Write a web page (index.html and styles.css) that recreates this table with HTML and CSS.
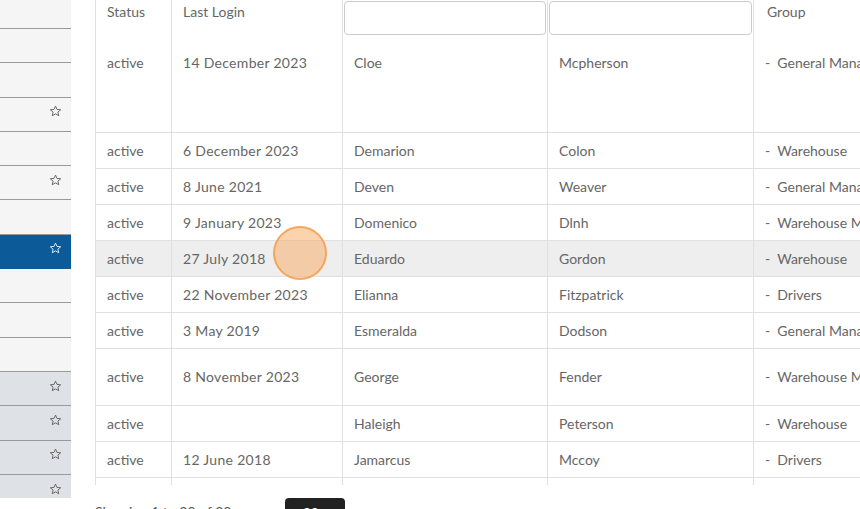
FILE: index.html
```html
<!DOCTYPE html>
<html>
<head>
<meta charset="utf-8">
<link rel="stylesheet" href="styles.css">
</head>
<body>
<div class="page">
  <aside class="side">
    <div class="srow first"></div>
    <div class="srow"></div>
    <div class="srow"></div>
    <div class="srow"><svg class="star" viewBox="0 0 12 12"><path d="M6 1 L7.4 4.1 L10.8 4.4 L8.2 6.6 L9 9.9 L6 8.2 L3 9.9 L3.8 6.6 L1.2 4.4 L4.6 4.1 Z"/></svg></div>
    <div class="srow"></div>
    <div class="srow"><svg class="star" viewBox="0 0 12 12"><path d="M6 1 L7.4 4.1 L10.8 4.4 L8.2 6.6 L9 9.9 L6 8.2 L3 9.9 L3.8 6.6 L1.2 4.4 L4.6 4.1 Z"/></svg></div>
    <div class="srow"></div>
    <div class="srow active"><svg class="star" viewBox="0 0 12 12"><path d="M6 1 L7.4 4.1 L10.8 4.4 L8.2 6.6 L9 9.9 L6 8.2 L3 9.9 L3.8 6.6 L1.2 4.4 L4.6 4.1 Z"/></svg></div>
    <div class="srow"></div>
    <div class="srow"></div>
    <div class="srow"></div>
    <div class="srow shade"><svg class="star" viewBox="0 0 12 12"><path d="M6 1 L7.4 4.1 L10.8 4.4 L8.2 6.6 L9 9.9 L6 8.2 L3 9.9 L3.8 6.6 L1.2 4.4 L4.6 4.1 Z"/></svg></div>
    <div class="srow shade"><svg class="star" viewBox="0 0 12 12"><path d="M6 1 L7.4 4.1 L10.8 4.4 L8.2 6.6 L9 9.9 L6 8.2 L3 9.9 L3.8 6.6 L1.2 4.4 L4.6 4.1 Z"/></svg></div>
    <div class="srow shade"><svg class="star" viewBox="0 0 12 12"><path d="M6 1 L7.4 4.1 L10.8 4.4 L8.2 6.6 L9 9.9 L6 8.2 L3 9.9 L3.8 6.6 L1.2 4.4 L4.6 4.1 Z"/></svg></div>
    <div class="srow shade"><svg class="star" viewBox="0 0 12 12"><path d="M6 1 L7.4 4.1 L10.8 4.4 L8.2 6.6 L9 9.9 L6 8.2 L3 9.9 L3.8 6.6 L1.2 4.4 L4.6 4.1 Z"/></svg></div>
  </aside>
  <main class="main">
    <div class="scroller">
      <table class="grid">
        <colgroup>
          <col class="c-status"><col class="c-login"><col class="c-first"><col class="c-last"><col class="c-group">
        </colgroup>
        <thead>
          <tr class="head">
            <th>Status</th>
            <th>Last Login</th>
            <th class="filter"><input type="text"></th>
            <th class="filter"><input type="text"></th>
            <th class="grp">Group</th>
          </tr>
        </thead>
        <tbody>
          <tr class="firstrow"><td>active</td><td class="date">14 December 2023</td><td>Cloe</td><td>Mcpherson</td><td class="grp">-&nbsp; General Manager</td></tr>
          <tr><td>active</td><td class="date">6 December 2023</td><td>Demarion</td><td>Colon</td><td class="grp">-&nbsp; Warehouse</td></tr>
          <tr><td>active</td><td class="date">8 June 2021</td><td>Deven</td><td>Weaver</td><td class="grp">-&nbsp; General Manager</td></tr>
          <tr><td>active</td><td class="date">9 January 2023</td><td>Domenico</td><td>Dlnh</td><td class="grp">-&nbsp; Warehouse Manager</td></tr>
          <tr class="hover"><td>active</td><td class="date">27 July 2018</td><td>Eduardo</td><td>Gordon</td><td class="grp">-&nbsp; Warehouse</td></tr>
          <tr><td>active</td><td class="date">22 November 2023</td><td>Elianna</td><td>Fitzpatrick</td><td class="grp">-&nbsp; Drivers</td></tr>
          <tr><td>active</td><td class="date">3 May 2019</td><td>Esmeralda</td><td>Dodson</td><td class="grp">-&nbsp; General Manager</td></tr>
          <tr class="tall"><td>active</td><td class="date">8 November 2023</td><td>George</td><td>Fender</td><td class="grp">-&nbsp; Warehouse Manager</td></tr>
          <tr><td>active</td><td class="date"></td><td>Haleigh</td><td>Peterson</td><td class="grp">-&nbsp; Warehouse</td></tr>
          <tr><td>active</td><td class="date">12 June 2018</td><td>Jamarcus</td><td>Mccoy</td><td class="grp">-&nbsp; Drivers</td></tr>
          <tr><td>active</td><td class="date">4 March 2022</td><td>Jayden</td><td>Lowe</td><td class="grp">-&nbsp; Warehouse</td></tr>
        </tbody>
      </table>
    </div>
    <div class="footer">
      <span class="info">Showing 1 to 20 of 20 rows</span>
      <span class="pagesize">20 ▾</span>
      <span class="info light">rows per page</span>
    </div>
  </main>
</div>
<div class="touch"></div>
</body>
</html>
```
FILE: styles.css
```css
html, body {
  margin: 0;
  padding: 0;
  background: #fff;
  overflow: hidden;
}
body {
  width: 860px;
  height: 509px;
  font-family: Lato, "Open Sans", sans-serif;
  font-size: 14px;
  color: #666;
}
.page {
  display: flex;
  gap: 24px;
  height: 509px;
}
.side {
  width: 71px;
  flex: none;
  height: 498px;
  overflow: hidden;
  background: #f5f5f5;
  display: flex;
  flex-direction: column;
}
.srow {
  box-sizing: border-box;
  height: 34.3px;
  flex: none;
  border-bottom: 1px solid #9a9a9a;
  display: flex;
  align-items: center;
  justify-content: flex-end;
  padding-right: 9px;
  padding-bottom: 5px;
}
.srow.first { height: 29px; }
.srow.active {
  background: #0c5a97;
  border-bottom-color: #0c5a97;
}
.srow.shade { background: #dee1e6; }
.star {
  width: 13px;
  height: 13px;
  fill: none;
  stroke: #666;
  stroke-width: 0.9;
  stroke-linejoin: round;
}
.srow.active .star { stroke: #d8ecff; }
.main {
  flex: 1;
  min-width: 0;
  display: flex;
  flex-direction: column;
}
.scroller {
  height: 485px;
  overflow: hidden;
  flex: none;
}
.grid {
  border-collapse: collapse;
  table-layout: fixed;
  width: 861px;
}
.c-status { width: 76px; }
.c-login { width: 171px; }
.c-first { width: 205px; }
.c-last { width: 206px; }
.c-group { width: 203px; }
.grid th, .grid td {
  border-left: 1px solid #e0e0e0;
  border-right: 1px solid #e0e0e0;
  text-align: left;
  white-space: nowrap;
  overflow: hidden;
}
.grid th {
  font-weight: normal;
  height: 37px;
  padding: 2px 11px 0;
  vertical-align: top;
  line-height: 20px;
  box-sizing: border-box;
}
.grid th.grp { padding-left: 13px; }
.grid th.filter { padding: 1px 1px 0; }
.grid th input {
  box-sizing: border-box;
  width: 100%;
  height: 34px;
  border: 1px solid #ccc;
  border-radius: 4px;
  margin: 0;
  display: block;
  background: #fff;
}
.grid td {
  border-bottom: 1px solid #e0e0e0;
  padding: 0 11px;
  height: 35px;
  line-height: 19px;
  vertical-align: middle;
}
.grid td.date {
  font-variant-numeric: tabular-nums;
  letter-spacing: 0.3px;
}
.grid tr.firstrow td {
  height: 95px;
  vertical-align: top;
  padding-top: 16px;
  box-sizing: border-box;
}
.grid tr.tall td { height: 56px; }
.grid tr.hover td { background: #eeeeee; }
.footer {
  padding-top: 17px;
  display: flex;
  align-items: flex-start;
  gap: 10px;
  line-height: 20px;
}
.info { color: #555; }
.info.light { color: #999; }
.pagesize {
  margin-left: 10px;
  background: #222;
  color: #fff;
  border-radius: 4px;
  padding: 0 18px;
  width: 24px;
  margin-top: -4px;
  height: 30px;
  line-height: 30px;
  font-weight: bold;
}
.touch {
  position: absolute;
  left: 273px;
  top: 226px;
  width: 50px;
  height: 50px;
  border-radius: 50%;
  border: 2px solid rgba(244, 160, 80, 0.85);
  background: rgba(248, 175, 110, 0.55);
}
```
